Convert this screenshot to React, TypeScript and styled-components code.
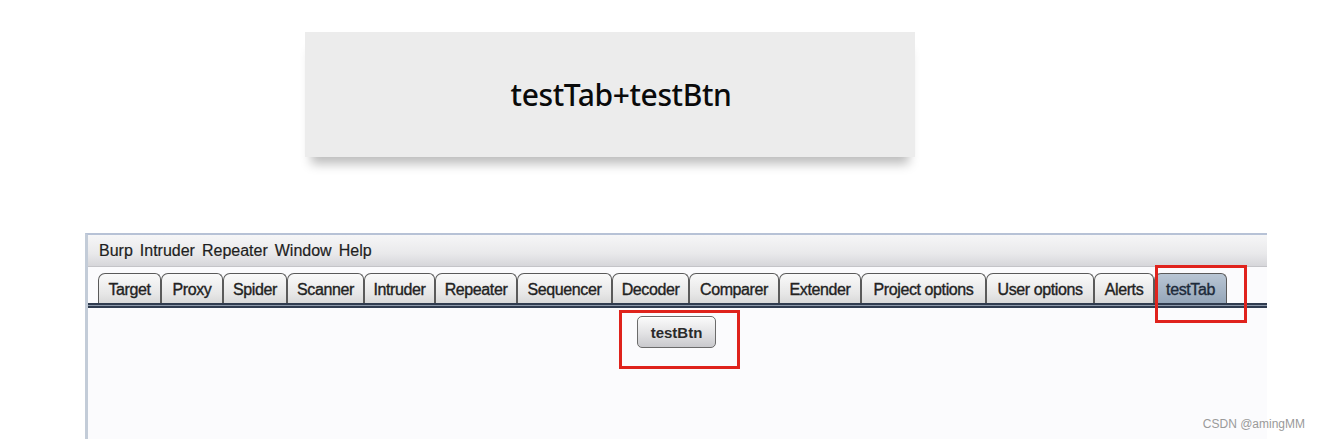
import React from "react";
import styled, { createGlobalStyle } from "styled-components";

const tabs: [string, number][] = [
  ["Target", 63],
  ["Proxy", 62],
  ["Spider", 64],
  ["Scanner", 77],
  ["Intruder", 71],
  ["Repeater", 82],
  ["Sequencer", 95],
  ["Decoder", 77],
  ["Comparer", 90],
  ["Extender", 82],
  ["Project options", 125],
  ["User options", 108],
  ["Alerts", 60],
  ["testTab", 73],
];

const menus = ["Burp", "Intruder", "Repeater", "Window", "Help"];

const App = () => {
  return (
    <Page>
      <GlobalStyle />
      <Card>
        <CardTitle>testTab+testBtn</CardTitle>
      </Card>
      <Window>
        <MenuBar>
          {menus.map((m) => (
            <MenuItem key={m}>{m}</MenuItem>
          ))}
        </MenuBar>
        <TabStrip>
          {tabs.map(([t, w]) => (
            <Tab key={t} w={w} selected={t === "testTab"}>
              {t}
            </Tab>
          ))}
          <TabMark />
        </TabStrip>
        <TabRule />
        <Content>
          <ButtonMark>
            <PushButton>testBtn</PushButton>
          </ButtonMark>
        </Content>
      </Window>
      <Watermark>CSDN @amingMM</Watermark>
    </Page>
  );
};

const GlobalStyle = createGlobalStyle`
  html, body {
    margin: 0;
    padding: 0;
    background: #ffffff;
  }
  body {
    font-family: "Liberation Sans", Arial, sans-serif;
  }
`;

const Page = styled.div`
  position: relative;
  width: 1320px;
  height: 439px;
  overflow: hidden;
  display: flex;
  flex-direction: column;
  padding-top: 32px;
  box-sizing: border-box;
`;

const Card = styled.div`
  margin-left: 305px;
  width: 610px;
  height: 125px;
  background: #ececec;
  box-shadow: 0 13px 10px -6px rgba(0, 0, 0, 0.26);
  display: flex;
  align-items: center;
  justify-content: center;
`;

const CardTitle = styled.div`
  font-family: "Noto Sans", "Open Sans", sans-serif;
  font-size: 30px;
  font-weight: 500;
  color: #0a0a0a;
  letter-spacing: -0.4px;
  padding-left: 22px;
`;

const Window = styled.div`
  position: relative;
  margin-top: 76px;
  margin-left: 85px;
  width: 1182px;
  box-sizing: border-box;
  flex: 1;
  display: flex;
  flex-direction: column;
  border-top: 2px solid #b7c2d6;
  border-left: 3px solid #c3ccd8;
  background: #fbfbfd;
`;

const MenuBar = styled.div`
  height: 31px;
  display: flex;
  align-items: center;
  gap: 7px;
  padding-left: 11px;
  background: linear-gradient(#f6f6f7, #e9e9eb 60%, #d6d6da);
  border-bottom: 1px solid #c4c4c8;
`;

const MenuItem = styled.span`
  font-size: 16px;
  color: #1e1e1e;
  -webkit-text-stroke: 0.2px #1e1e1e;
`;

const TabStrip = styled.div`
  position: relative;
  display: flex;
  align-items: flex-end;
  padding: 5px 0 0 10px;
  height: 31px;
  background: #fbfbfd;
`;

const Tab = styled.div<{ w: number; selected?: boolean }>`
  width: ${({ w }) => w}px;
  height: 30px;
  box-sizing: border-box;
  display: flex;
  align-items: center;
  justify-content: center;
  padding-top: 2px;
  font-size: 16px;
  letter-spacing: -0.4px;
  white-space: nowrap;
  color: ${({ selected }) => (selected ? "#1d2a3a" : "#222")};
  -webkit-text-stroke: 0.35px ${({ selected }) => (selected ? "#1d2a3a" : "#222")};
  border: 1px solid #5a5a5a;
  border-bottom: none;
  border-radius: 7px 6px 0 0;
  background: ${({ selected }) =>
    selected
      ? "linear-gradient(#b9c6d4, #95a6b9)"
      : "linear-gradient(#fafafa, #e6e6e6 70%, #d9d9d9)"};
`;

const TabMark = styled.div`
  position: absolute;
  left: 1067px;
  top: -2px;
  width: 92px;
  height: 58px;
  border: 3px solid #e0231d;
  box-sizing: border-box;
`;

const TabRule = styled.div`
  height: 5px;
  background: linear-gradient(#2f3b4f 0 2px, #8d99ab 2px 3px, #2f3b4f 3px);
`;

const Content = styled.div`
  flex: 1;
  display: flex;
  justify-content: center;
  align-items: flex-start;
  padding-top: 2px;
`;

const ButtonMark = styled.div`
  margin-left: 4px;
  width: 121px;
  height: 59px;
  box-sizing: border-box;
  border: 3px solid #df231c;
  padding: 3px 0 0 15px;
`;

const PushButton = styled.div`
  width: 79px;
  height: 32px;
  box-sizing: border-box;
  display: flex;
  align-items: center;
  justify-content: center;
  font-size: 15px;
  font-weight: bold;
  color: #2a2a2a;
  border: 1px solid #6b6b6b;
  border-radius: 5px;
  background: linear-gradient(#fbfbfb, #e2e2e4 55%, #c9c9cd);
  box-shadow: inset 0 1px 0 #ffffff;
`;

const Watermark = styled.div`
  position: absolute;
  right: 15px;
  bottom: 8px;
  font-size: 12px;
  color: #9a9a9a;
`;

export default App;
